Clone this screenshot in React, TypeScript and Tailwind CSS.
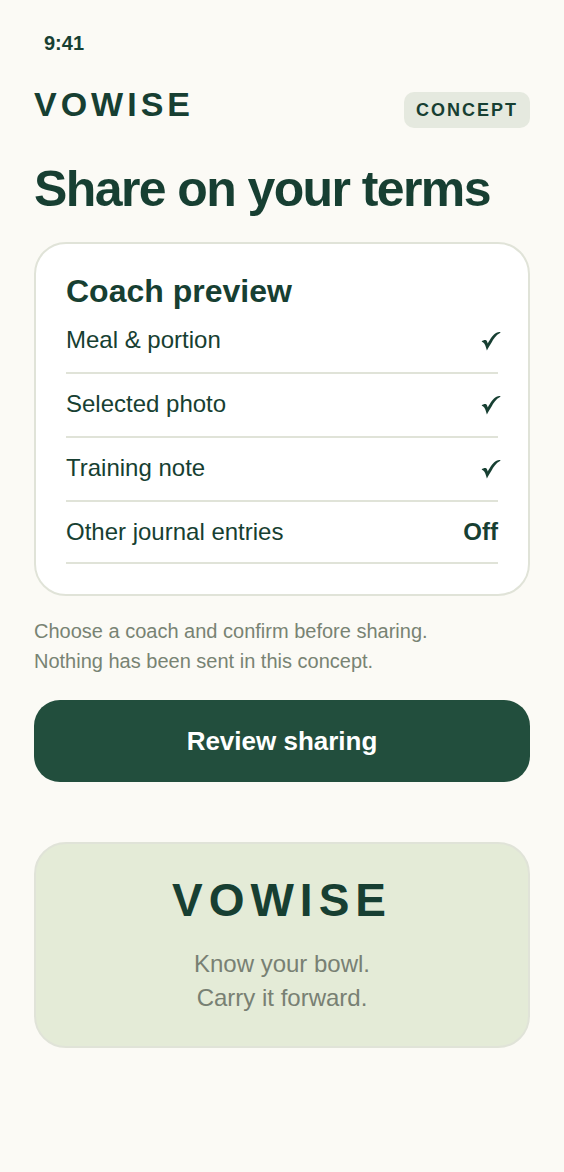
const previewRows = [
  { label: 'Meal & portion', shared: true },
  { label: 'Selected photo', shared: true },
  { label: 'Training note', shared: true },
  { label: 'Other journal entries', shared: false },
];

function CheckMark() {
  return (
    <svg viewBox="0 0 20 20" className="mt-[2px] -mr-[3px] h-5 w-5" fill="currentColor" aria-label="Shared">
      <path d="M0.6 10.4C2 9.2 4.2 8.6 5.2 9.3C5.9 9.9 6.3 11 6.7 12.4C9.3 8 12 3.2 15.5 1.7C17 1 18.5 1 19.6 1.2L19 2C15 4 12.5 8 10.6 11.5C9 14.3 7.2 17 5.9 19.4C5.1 16.5 4 12.6 2.2 11.4Z" />
    </svg>
  );
}

function PreviewRow({ label, shared, last }: { label: string; shared: boolean; last: boolean }) {
  return (
    <div
      className={`flex items-center justify-between border-b-2 border-[#e0e3d8] text-2xl ${last ? 'h-[62px]' : 'h-16 pb-[2px]'}`}
    >
      <span>{label}</span>
      {shared ? <CheckMark /> : <span className="font-bold">Off</span>}
    </div>
  );
}

export default function App() {
  return (
    <main className="min-h-[1172px] bg-[#fbfaf5] px-[34px] pt-[31px] font-['Liberation_Sans',Arial,sans-serif] text-[#173f32]">
      <div className="pl-[10px] text-xl leading-6 font-bold">9:41</div>

      <header className="mt-[30px] flex h-[43px] items-start justify-between">
        <div className="text-[34px] leading-[38px] font-bold tracking-[4px]">VOWISE</div>
        <span className="mt-[7px] flex h-9 items-center rounded-[10px] bg-[#e5e9df] px-3 text-lg font-bold tracking-[2px]">
          CONCEPT
        </span>
      </header>

      <h1 className="mt-[34px] text-[50px] leading-[54px] font-bold tracking-[-1.6px] whitespace-nowrap">
        Share on your terms
      </h1>

      <section className="mt-[26px] h-[354px] rounded-[32px] border-2 border-[#e0e3d8] bg-white px-[30px] pt-[28px]">
        <h2 className="text-[32px] leading-[38px] font-bold">Coach preview</h2>
        {previewRows.map((row, index) => (
          <PreviewRow
            key={row.label}
            label={row.label}
            shared={row.shared}
            last={index === previewRows.length - 1}
          />
        ))}
      </section>

      <p className="mt-5 text-xl leading-[30px] text-[#788373]">
        Choose a coach and confirm before sharing.
        <br />
        Nothing has been sent in this concept.
      </p>

      <button
        type="button"
        className="mt-6 h-[82px] w-full rounded-[26px] bg-[#224e3d] text-[26px] font-bold text-white"
      >
        Review sharing
      </button>

      <section className="mt-[60px] h-[206px] rounded-[32px] border-2 border-[#e0e3d8] bg-[#e4ebd7] pt-[28px] text-center">
        <div className="text-[46px] leading-[56px] font-bold tracking-[6px]">VOWISE</div>
        <p className="mt-[19px] text-2xl leading-[34px] text-[#788073]">
          Know your bowl.
          <br />
          Carry it forward.
        </p>
      </section>
    </main>
  );
}
